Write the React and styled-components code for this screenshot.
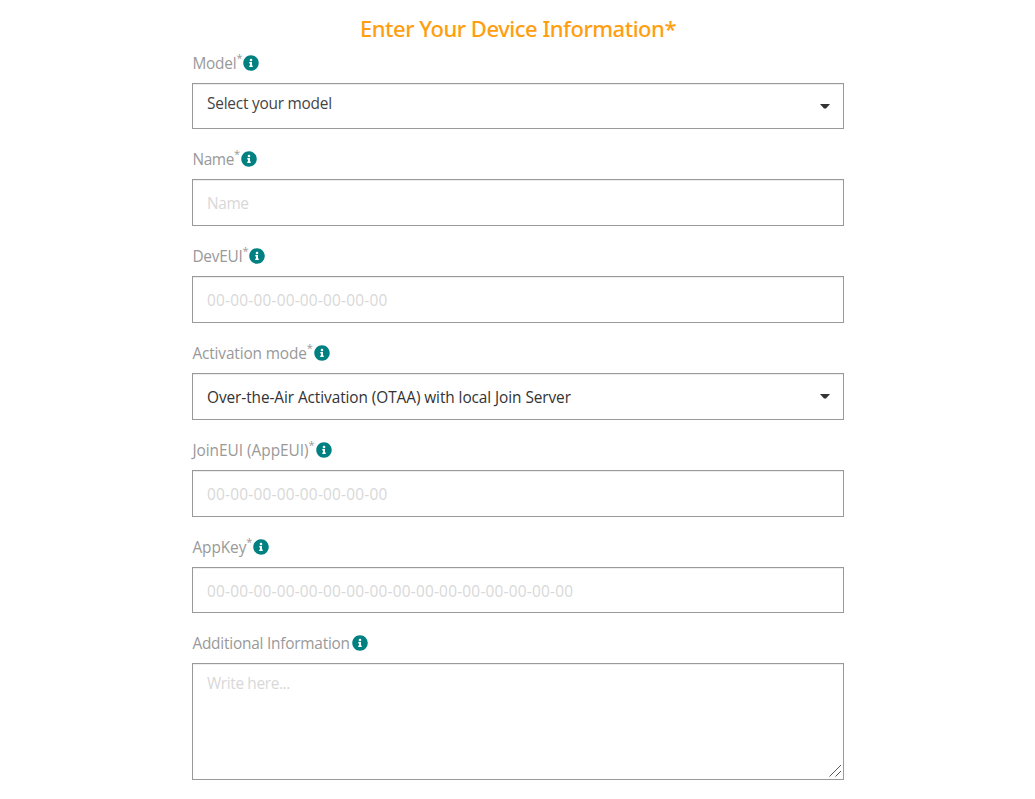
import React from "react";
import styled, { createGlobalStyle, css } from "styled-components";
import { FaInfoCircle } from "react-icons/fa";

const GlobalStyle = createGlobalStyle`
  *, *::before, *::after { box-sizing: border-box; }
  body {
    margin: 0;
    background: #fff;
    font-family: "Open Sans", "Noto Sans", sans-serif;
    font-size: 15.4px;
    line-height: 24px;
    color: #333;
    overflow: hidden;
  }
`;

const Page = styled.main`
  display: flex;
  flex-direction: column;
  align-items: center;
  height: 799px;
  padding: 12px 0 0 1px;
`;

const Title = styled.h1`
  margin: 0;
  font-family: "Noto Sans", "Open Sans", sans-serif;
  font-size: 22px;
  font-weight: 500;
  line-height: 32px;
  letter-spacing: -0.48px;
  color: #ff9e0f;
`;

const Form = styled.form`
  display: flex;
  flex-direction: column;
  gap: 18px;
  width: 652px;
  margin-top: 7px;
`;

const Field = styled.div`
  display: flex;
  flex-direction: column;
`;

const Label = styled.label`
  display: flex;
  align-items: center;
  height: 24px;
  margin-bottom: 8px;
  color: #999;
  letter-spacing: ${(p) => p.$track}px;
`;

const LabelText = styled.span`
  padding: 2px 0 0 0.4px;
`;

const Star = styled.sup`
  align-self: flex-start;
  width: 6px;
  font-size: 11px;
  line-height: 13px;
  letter-spacing: 0;
`;

const InfoIcon = styled(FaInfoCircle)`
  width: 16px;
  height: 16px;
  margin-left: ${(p) => (p.$required ? 1 : 2)}px;
  color: #008080;
`;

const control = css`
  width: 100%;
  margin: 0;
  border: 1px solid #999;
  border-radius: 0;
  background: #fff;
  box-shadow: inset 0 1px 1px rgba(0, 0, 0, 0.075);
  font: inherit;
  outline: none;
  letter-spacing: ${(p) => p.$track}px;
  &::placeholder { color: #d8d8d8; opacity: 1; }
`;

const Input = styled.input`
  ${control}
  height: ${(p) => p.$height}px;
  padding: 2px 14px 0;
`;

const Select = styled.div`
  ${control}
  display: flex;
  align-items: center;
  justify-content: space-between;
  height: ${(p) => p.$height}px;
  padding: 0 13px 0 14px;
  color: ${(p) => p.$color};
`;

const Value = styled.span`
  padding-${(p) => (p.$raised ? "bottom" : "top")}: ${(p) => (p.$raised ? 4 : 2)}px;
`;

const Caret = styled.svg`
  width: 10px;
  height: 5px;
  fill: #333;
`;

const TextAreaBox = styled.div`
  position: relative;
  height: 117px;
`;

const TextArea = styled.textarea`
  ${control}
  display: block;
  height: 100%;
  padding: 8px 14px;
  resize: none;
`;

const Grip = styled.svg`
  position: absolute;
  right: 2px;
  bottom: 3px;
  width: 13px;
  height: 12px;
  stroke: #555;
  fill: none;
`;

const zeros = (n) => Array(n).fill("00").join("-");

const FIELDS = [
  { label: "Model", track: -0.2, required: true, type: "select", height: 46, value: "Select your model", valueTrack: -0.22, raised: true, color: "#444" },
  { label: "Name", track: -0.35, required: true, height: 47, value: "Name", valueTrack: -0.35 },
  { label: "DevEUI", track: -0.25, required: true, height: 47, value: zeros(8), valueTrack: 0.22 },
  { label: "Activation mode", track: -0.13, required: true, type: "select", height: 47, value: "Over-the-Air Activation (OTAA) with local Join Server", valueTrack: -0.08, color: "#333" },
  { label: "JoinEUI (AppEUI)", track: -0.02, required: true, height: 47, value: zeros(8), valueTrack: 0.22 },
  { label: "AppKey", track: -0.07, required: true, height: 46, value: zeros(16), valueTrack: 0.22 },
  { label: "Additional Information", track: -0.22, type: "textarea", value: "Write here...", valueTrack: -0.36 },
];

function Control({ type, height, value, valueTrack, raised, color }) {
  if (type === "select") {
    return (
      <Select role="combobox" tabIndex={0} $height={height} $track={valueTrack} $color={color}>
        <Value $raised={raised}>{value}</Value>
        <Caret viewBox="0 0 10 5"><path d="M0 0h10L6 4.5H4z" /></Caret>
      </Select>
    );
  }
  if (type === "textarea") {
    return (
      <TextAreaBox>
        <TextArea placeholder={value} $track={valueTrack} />
        <Grip viewBox="0 0 13 12"><path d="M0.5 11.5L12 0M6.5 11.5L12 6" /></Grip>
      </TextAreaBox>
    );
  }
  return <Input placeholder={value} $height={height} $track={valueTrack} />;
}

export default function App() {
  return (
    <>
      <GlobalStyle />
      <Page>
        <Title>Enter Your Device Information*</Title>
        <Form>
          {FIELDS.map((f) => (
            <Field key={f.label}>
              <Label $track={f.track}>
                <LabelText>{f.label}</LabelText>
                {f.required && <Star>*</Star>}
                <InfoIcon $required={f.required} />
              </Label>
              <Control {...f} />
            </Field>
          ))}
        </Form>
      </Page>
    </>
  );
}
